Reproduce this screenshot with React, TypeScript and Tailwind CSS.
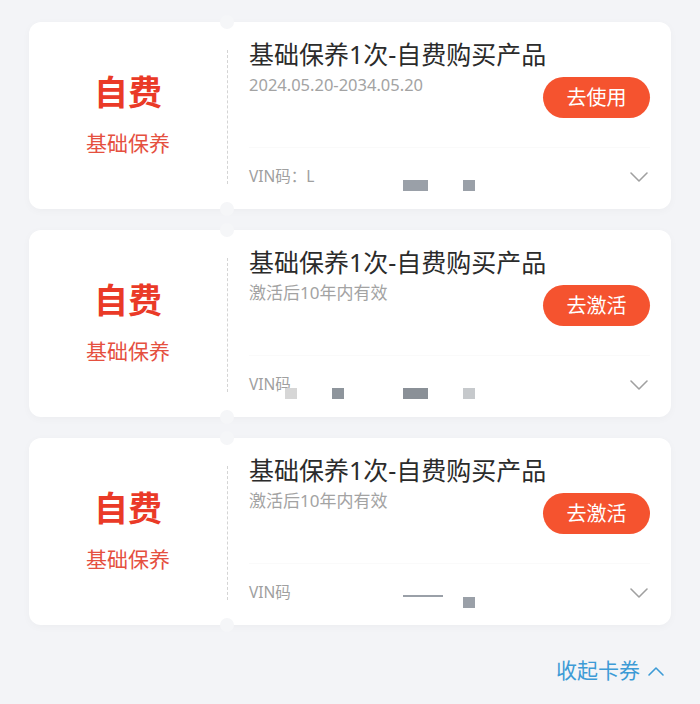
import React from "react";

type Block = { left: number; top: number; w: number; h: number; c: string };

const FONT = { fontFamily: '"Noto Sans", "Noto Sans CJK SC", sans-serif' };

function Chevron({ up = false, className = "" }: { up?: boolean; className?: string }) {
  return (
    <svg width="20" height="12" viewBox="0 0 20 12" className={className} fill="none">
      <path
        d={up ? "M3 10 L10 3 L17 10" : "M2 2 L10 10 L18 2"}
        stroke="currentColor"
        strokeWidth="1.6"
        strokeLinecap="round"
        strokeLinejoin="round"
      />
    </svg>
  );
}

function Card({
  sub,
  subSize,
  btn,
  vin,
  blocks,
}: {
  sub: string;
  subSize: string;
  btn: string;
  vin: string;
  blocks: Block[];
}) {
  return (
    <div className="relative flex h-[187px] rounded-[12px] bg-white shadow-[0_2px_8px_rgba(0,0,0,0.03)]">
      <div className="flex w-[198px] flex-col items-center justify-center pb-[2px]">
        <div className="text-[34px] font-bold leading-[40px] text-[#ea3a27]">自费</div>
        <div className="mt-[17px] text-[21px] leading-[28px] text-[#e5503f]">基础保养</div>
      </div>
      <div className="relative w-0">
        <div className="absolute left-0 top-[28px] h-[134px] border-l border-dashed border-[#d4d4d4]" />
        <div className="absolute left-[-7px] top-[-7px] h-[14px] w-[14px] rounded-full bg-[#f5f6f8]" />
        <div className="absolute bottom-[-7px] left-[-7px] h-[14px] w-[14px] rounded-full bg-[#f5f6f8]" />
      </div>
      <div className="flex flex-1 flex-col pl-[22px] pr-[21px]">
        <div className="mt-[17px] text-[25px] leading-[30px] text-[#2b2b2b]">基础保养1次-自费购买产品</div>
        <div className="flex items-start justify-between">
          <div className={`mt-[5px] leading-[22px] text-[#a3a3a3] ${subSize}`}>{sub}</div>
          <div className="mt-[8px] flex h-[41px] w-[107px] items-center justify-center rounded-full bg-[#f5532f] text-[20px] text-white">
            {btn}
          </div>
        </div>
        <div className="mt-[29px] h-px bg-[#fafafa]" />
        <div className="relative mt-[17px] flex h-[24px] items-center justify-between">
          <div className="text-[15.5px] text-[#a0a0a0]">{vin}</div>
          <Chevron className="mr-[1px] text-[#a0a0a0]" />
          {blocks.map((b, i) => (
            <div
              key={i}
              className="absolute"
              style={{ left: b.left, top: b.top, width: b.w, height: b.h, background: b.c }}
            />
          ))}
        </div>
      </div>
    </div>
  );
}

export default function App() {
  return (
    <div className="min-h-[704px] w-[700px] bg-[#f3f4f7] pt-[22px]" style={FONT}>
      <div className="flex flex-col gap-[21px] px-[29px]">
        <Card
          sub="2024.05.20-2034.05.20"
          subSize="text-[16.5px]"
          btn="去使用"
          vin="VIN码：L"
          blocks={[
            { left: 154, top: 15, w: 25, h: 11, c: "#9aa0a8" },
            { left: 214, top: 15, w: 12, h: 11, c: "#9aa0a8" },
          ]}
        />
        <Card
          sub="激活后10年内有效"
          subSize="text-[17px]"
          btn="去激活"
          vin="VIN码"
          blocks={[
            { left: 36, top: 15, w: 12, h: 11, c: "#d6d6d6" },
            { left: 83, top: 15, w: 12, h: 11, c: "#8e959c" },
            { left: 154, top: 15, w: 25, h: 11, c: "#8a9097" },
            { left: 214, top: 15, w: 12, h: 11, c: "#c6c9cc" },
          ]}
        />
        <Card
          sub="激活后10年内有效"
          subSize="text-[17px]"
          btn="去激活"
          vin="VIN码"
          blocks={[
            { left: 154, top: 14, w: 40, h: 2, c: "#9aa0a8" },
            { left: 214, top: 16, w: 12, h: 11, c: "#9aa0a8" },
          ]}
        />
      </div>
      <div className="mt-[30px] flex items-center justify-end gap-[6px] pr-[34px] text-[21px] text-[#3d9bd6]">
        <span>收起卡券</span>
        <Chevron up />
      </div>
    </div>
  );
}
